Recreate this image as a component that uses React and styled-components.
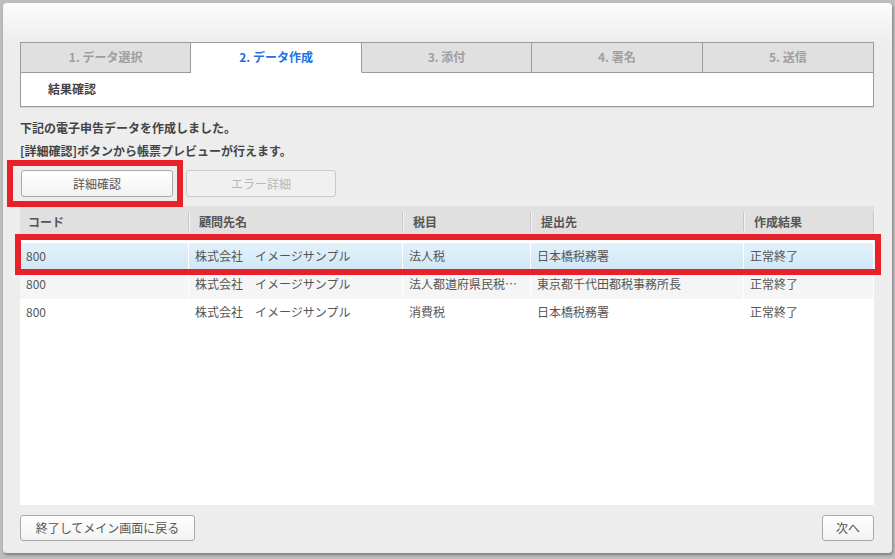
import React from 'react';
import styled, { createGlobalStyle } from 'styled-components';

const color = {
	backdrop: '#bdbdbd',
	dialog: '#ededed',
	border: '#9a9a9a',
	tabOff: '#e0e0e0',
	tabText: '#9e9e9e',
	blue: '#1f6fe6',
	text: '#555',
	strong: '#444',
	red: '#e8202a',
};

const GlobalStyle = createGlobalStyle`
	html, body {
		margin: 0;
		background: ${color.backdrop};
		font-family: "Noto Sans CJK JP", "Noto Sans", sans-serif;
		font-size: 12px;
	}
`;

const Screen = styled.div`
	width: 895px;
	height: 559px;
	padding: 3px 0 0 3px;
	box-sizing: border-box;
`;

const Dialog = styled.div`
	width: 889px;
	height: 550px;
	box-sizing: border-box;
	padding: 39px 18px 12px 17px;
	display: flex;
	flex-direction: column;
	background: linear-gradient(#fbfbfb, ${color.dialog} 42px);
	border-radius: 4px;
	box-shadow: 1px 2px 3px rgba(0, 0, 0, 0.35);
`;

const TabBox = styled.div`
	border: 1px solid ${color.border};
	background: #fff;
	box-shadow: 0 1px 0 #d6d6d6;
`;

const TabRow = styled.div`
	display: grid;
	grid-template-columns: repeat(5, 1fr);
	height: 30px;
`;

const Tab = styled.div`
	display: flex;
	align-items: center;
	justify-content: center;
	padding-bottom: 2px;
	box-sizing: border-box;
	font-weight: 700;
	color: ${p => (p.$active ? color.blue : color.tabText)};
	background: ${p => (p.$active ? '#fff' : color.tabOff)};
	border-bottom: 1px solid ${p => (p.$active ? '#fff' : color.border)};
	border-right: 1px solid ${color.border};
	&:last-child {
		border-right: none;
	}
`;

const TabBody = styled.div`
	height: 33px;
	box-sizing: border-box;
	display: flex;
	align-items: center;
	padding: 0 0 3px 27px;
	font-weight: 700;
	color: ${color.strong};
`;

const Message = styled.div`
	margin-top: 9px;
	line-height: 23px;
	font-weight: 700;
	color: ${color.strong};
`;

const ButtonRow = styled.div`
	margin-top: 8px;
	display: flex;
	gap: 13px;
	padding-left: 1px;
`;

const Marked = styled.div`
	position: relative;
	display: flex;
`;

const Frame = styled.span`
	position: absolute;
	top: ${p => p.$t}px;
	left: ${p => p.$l}px;
	right: ${p => p.$r}px;
	bottom: ${p => p.$b}px;
	border: 6px solid ${color.red};
	pointer-events: none;
	z-index: 2;
`;

const Button = styled.button`
	height: ${p => p.$h || 27}px;
	width: ${p => p.$w}px;
	padding: 0 0 1px;
	border: 1px solid #a9a9a9;
	border-radius: 3px;
	background: linear-gradient(#ffffff, #f2f2f2);
	font-family: inherit;
	font-size: 12px;
	color: ${color.text};
	&:disabled {
		background: #f0f0f0;
		border-color: #c9c9c9;
		color: #b8b8b8;
	}
`;

const Grid = styled.div`
	margin-top: 9px;
	flex: 1;
	display: flex;
	flex-direction: column;
	background: #fff;
`;

const cols = '169px 214px 128px 213px 1fr';

const HeadRow = styled.div`
	display: grid;
	grid-template-columns: ${cols};
	height: 28px;
	background: #e0e0e0;
`;

const HeadCell = styled.div`
	position: relative;
	display: flex;
	align-items: center;
	padding: 3px 0 0 ${p => p.$pad || 9}px;
	font-weight: 700;
	color: ${color.text};
	&::after {
		content: '';
		position: absolute;
		right: 0;
		top: 6px;
		bottom: 3px;
		width: 1px;
		background: #c6c6c6;
		box-shadow: 1px 0 0 #f4f4f4;
	}
`;

const Body = styled.div`
	flex: 1;
	padding-top: 9px;
`;

const Row = styled.div`
	position: relative;
	display: grid;
	grid-template-columns: ${cols};
	height: 28px;
	background: ${p =>
		p.$selected
			? 'linear-gradient(#e3f2fb, #cfe7f5)'
			: p.$alt
			? '#f5f5f5'
			: '#fff'};
`;

const Cell = styled.div`
	display: flex;
	align-items: center;
	min-width: 0;
	padding: 0 6px 3px;
	color: ${color.text};
	border-right: 1px solid #fff;
	span {
		overflow: hidden;
		white-space: nowrap;
		text-overflow: ellipsis;
	}
`;

const Footer = styled.div`
	margin-top: 10px;
	display: flex;
	justify-content: space-between;
	align-items: center;
`;

const tabs = ['1. データ選択', '2. データ作成', '3. 添付', '4. 署名', '5. 送信'];

const heads = ['コード', '顧問先名', '税目', '提出先', '作成結果'];

const rows = [
	['800', '株式会社　イメージサンプル', '法人税', '日本橋税務署', '正常終了'],
	['800', '株式会社　イメージサンプル', '法人都道府県民税・事業税', '東京都千代田都税事務所長', '正常終了'],
	['800', '株式会社　イメージサンプル', '消費税', '日本橋税務署', '正常終了'],
];

export default function App() {
	return (
		<Screen>
			<GlobalStyle />
			<Dialog>
				<TabBox>
					<TabRow>
						{tabs.map((t, i) => (
							<Tab key={t} $active={i === 1}>{t}</Tab>
						))}
					</TabRow>
					<TabBody>結果確認</TabBody>
				</TabBox>

				<Message>
					<div>下記の電子申告データを作成しました。</div>
					<div>[詳細確認]ボタンから帳票プレビューが行えます。</div>
				</Message>

				<ButtonRow>
					<Marked>
						<Button $w={152}>詳細確認</Button>
						<Frame $t={-10} $l={-14} $r={-10} $b={-10} />
					</Marked>
					<Button $w={150} disabled>エラー詳細</Button>
				</ButtonRow>

				<Grid>
					<HeadRow>
						{heads.map((h, i) => (
							<HeadCell key={h} $pad={i === 0 ? 8 : 10}>{h}</HeadCell>
						))}
					</HeadRow>
					<Body>
						{rows.map((r, i) => (
							<Row key={i} $selected={i === 0} $alt={i === 1}>
								{r.map((c, j) => (
									<Cell key={j}><span>{c}</span></Cell>
								))}
								{i === 0 && <Frame $t={-9} $l={-5} $r={-7} $b={-4} />}
							</Row>
						))}
					</Body>
				</Grid>

				<Footer>
					<Button $w={175} $h={26}>終了してメイン画面に戻る</Button>
					<Button $w={52} $h={26}>次へ</Button>
				</Footer>
			</Dialog>
		</Screen>
	);
}
